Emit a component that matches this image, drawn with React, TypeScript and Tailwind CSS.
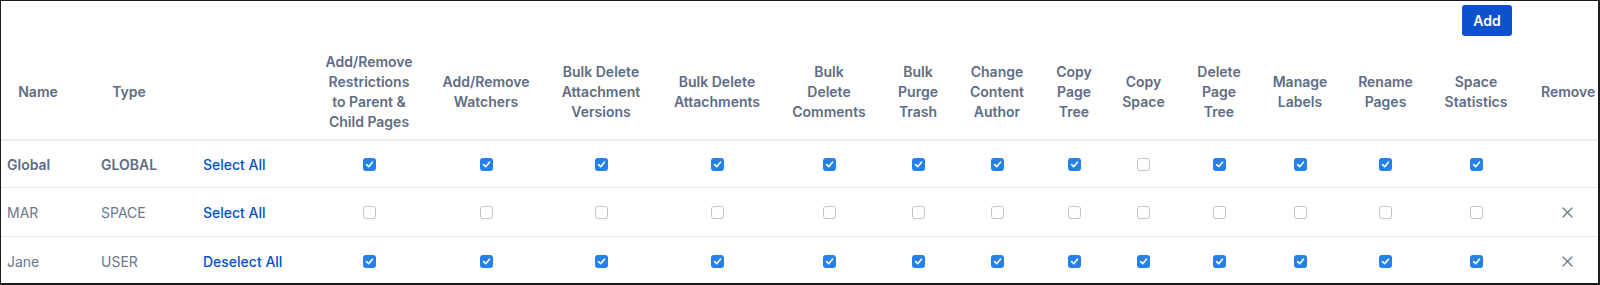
import React from "react";

const COLS = "grid-cols-[74px_108px_127px_118px_116px_114px_118px_106px_72px_86px_68px_71px_80px_82px_89px_92px_76px]";

const headers: string[][] = [
  ["Add/Remove", "Restrictions", "to Parent &", "Child Pages"],
  ["Add/Remove", "Watchers"],
  ["Bulk Delete", "Attachment", "Versions"],
  ["Bulk Delete", "Attachments"],
  ["Bulk", "Delete", "Comments"],
  ["Bulk", "Purge", "Trash"],
  ["Change", "Content", "Author"],
  ["Copy", "Page", "Tree"],
  ["Copy", "Space"],
  ["Delete", "Page", "Tree"],
  ["Manage", "Labels"],
  ["Rename", "Pages"],
  ["Space", "Statistics"],
];

type Row = {
  name: string;
  type: string;
  action: string;
  bold: boolean;
  checks: boolean[];
  removable: boolean;
};

const rows: Row[] = [
  {
    name: "Global",
    type: "GLOBAL",
    action: "Select All",
    bold: true,
    checks: [true, true, true, true, true, true, true, true, false, true, true, true, true],
    removable: false,
  },
  {
    name: "MAR",
    type: "SPACE",
    action: "Select All",
    bold: false,
    checks: Array(13).fill(false),
    removable: true,
  },
  {
    name: "Jane",
    type: "USER",
    action: "Deselect All",
    bold: false,
    checks: Array(13).fill(true),
    removable: true,
  },
];

function Checkbox({ checked }: { checked: boolean }) {
  if (checked) {
    return (
      <span className="inline-flex w-[13px] h-[13px] rounded-[3px] bg-[#2680eb] items-center justify-center">
        <svg width="9" height="9" viewBox="0 0 10 10" fill="none">
          <path d="M1.8 5.2 L4.1 7.4 L8.3 2.4" stroke="white" strokeWidth="1.8" strokeLinecap="round" strokeLinejoin="round" />
        </svg>
      </span>
    );
  }
  return (
    <span className="inline-block w-[13px] h-[13px] rounded-[3px] border border-[#c6c6c6] bg-white shadow-[0_0.5px_0.5px_rgba(0,0,0,0.06)]" />
  );
}

function XIcon() {
  return (
    <svg width="11" height="11" viewBox="0 0 11 11" fill="none">
      <path d="M1 1 L10 10 M10 1 L1 10" stroke="#6b778c" strokeWidth="1.3" strokeLinecap="round" />
    </svg>
  );
}

export default function App() {
  return (
    <div
      className="w-[1600px] h-[285px] bg-white border-t border-l border-r-2 border-b-2 border-[#1c1c1c] overflow-hidden"
      style={{ fontFamily: "Inter, 'Noto Sans', 'Liberation Sans', sans-serif" }}
    >
      <div className="flex justify-end pt-[4px] pr-[86px]">
        <button className="w-[50px] h-[31px] rounded-[3px] bg-[#0c52cc] text-white text-[14px] font-semibold leading-none">
          Add
        </button>
      </div>

      <div className={`grid ${COLS} mt-[8px] h-[97px] border-b-2 border-[#ebecf0] items-center text-[14px] leading-[20px] font-semibold text-[#5e6c84]`}>
        <div className="text-center">Name</div>
        <div className="text-center">Type</div>
        <div />
        {headers.map((lines, i) => (
          <div key={i} className="text-center whitespace-nowrap">
            {lines.map((l, j) => (
              <div key={j}>{l}</div>
            ))}
          </div>
        ))}
        <div className="text-center pl-[19px] pr-[4px]">Remove</div>
      </div>

      {rows.map((r, ri) => (
        <div
          key={ri}
          className={`grid ${COLS} items-center text-[14px] ${
            ri === 0 ? "h-[47px]" : "h-[49px]"
          } ${ri < rows.length - 1 ? "border-b border-[#e6e8ec]" : ""}`}
        >
          <div className={`pl-[6px] ${r.bold ? "font-semibold text-[#5e6c84]" : "text-[#6b778c]"}`}>{r.name}</div>
          <div className={`pl-[26px] ${r.bold ? "font-semibold text-[#5e6c84]" : "text-[#6b778c]"}`}>{r.type}</div>
          <div className="pl-[20px] font-medium text-[#0052cc]">{r.action}</div>
          {r.checks.map((c, ci) => (
            <div key={ci} className="flex justify-center">
              <Checkbox checked={c} />
            </div>
          ))}
          <div className="flex justify-center pl-[19px] pr-[4px]">{r.removable ? <XIcon /> : null}</div>
        </div>
      ))}
    </div>
  );
}
